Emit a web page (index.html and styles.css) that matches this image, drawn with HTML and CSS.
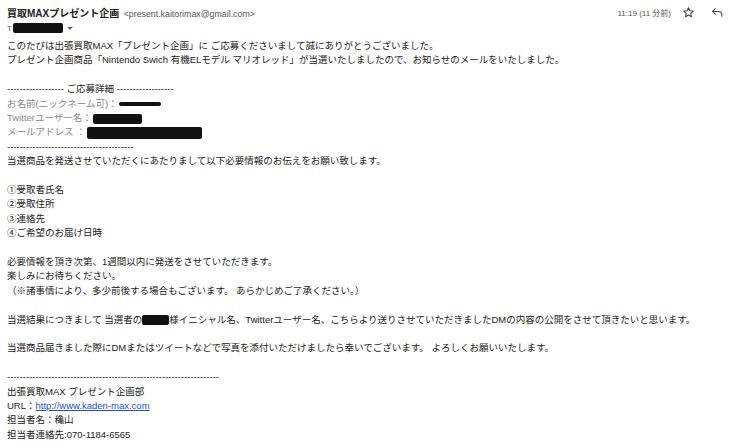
FILE: index.html
```html
<!DOCTYPE html>
<html lang="ja">
<head>
  <meta charset="UTF-8" />
  <title>当選のお知らせ</title>
  <link rel="stylesheet" href="styles.css">
</head>
<body>

  <div class="mail">
    <div class="mail-head">
      <div class="sender">
        <span class="sender-name">買取MAXプレゼント企画</span>
        <span class="sender-mail">&lt;present.kaitorimax@gmail.com&gt;</span>
      </div>
      <div class="meta">
        <span class="time">11:19 (11 分前)</span>
        <svg class="icon star" width="13" height="13" viewBox="0 0 24 24">
          <path d="M12 3.2l2.6 5.6 6.1.7-4.5 4.2 1.2 6-5.4-3.1-5.4 3.1 1.2-6-4.5-4.2 6.1-.7z" fill="none" stroke="#444" stroke-width="2" stroke-linejoin="round"/>
        </svg>
        <svg class="icon reply" width="13" height="13" viewBox="0 0 24 24">
          <path d="M8 5L3 10l5 5M3 10h11a6 6 0 0 1 6 6v3" fill="none" stroke="#444" stroke-width="2" stroke-linecap="round" stroke-linejoin="round"/>
        </svg>
      </div>
    </div>
    <div class="to-line">
      <span class="to">T</span><span class="redact redact-to"></span>
      <span class="caret"></span>
    </div>

    <div class="body">
      <p>このたびは出張買取MAX「プレゼント企画」に ご応募くださいまして誠にありがとうございました。<br>
      プレゼント企画商品「Nintendo Swich 有機ELモデル マリオレッド」が当選いたしましたので、お知らせのメールをいたしました。</p>

      <p>------------------ ご応募詳細 ------------------<br>
      <span class="muted">お名前(ニックネーム可)：</span><span class="redact redact-name"></span><br>
      <span class="muted">Twitterユーザー名：</span><span class="redact redact-tw"></span><br>
      <span class="muted">メールアドレス ：</span><span class="redact redact-mail"></span><br>
      ----------------------------------------<br>
      当選商品を発送させていただくにあたりまして以下必要情報のお伝えをお願い致します。</p>

      <p>①受取者氏名<br>
      ②受取住所<br>
      ③連絡先<br>
      ④ご希望のお届け日時</p>

      <p>必要情報を頂き次第、1週間以内に発送をさせていただきます。<br>
      楽しみにお待ちください。<br>
      （※諸事情により、多少前後する場合もございます。 あらかじめご了承ください。）</p>

      <p>当選結果につきまして 当選者の<span class="redact redact-winner"></span>様イニシャル名、Twitterユーザー名、こちらより送りさせていただきましたDMの内容の公開をさせて頂きたいと思います。</p>

      <p>当選商品届きました際にDMまたはツイートなどで写真を添付いただけましたら幸いでございます。 よろしくお願いいたします。</p>

      <p>-------------------------------------------------------------------<br>
      出張買取MAX プレゼント企画部<br>
      URL：<a href="#">http://www.kaden-max.com</a><br>
      担当者名：穐山<br>
      担当者連絡先:070-1184-6565</p>
    </div>
  </div>

</body>
</html>
```

FILE: styles.css
```css
body {
  margin: 0;
  background: #fff;
  font-family: "Liberation Sans", "Noto Sans CJK JP", sans-serif;
  color: #222;
}

.mail {
  padding: 4px 6px 0 7px;
}

.mail-head {
  display: flex;
  align-items: center;
  justify-content: space-between;
  height: 16px;
}

.sender-name {
  font-size: 10px;
  font-weight: bold;
  color: #222;
}

.sender-mail {
  font-size: 8.8px;
  color: #555;
}

.meta {
  display: flex;
  align-items: center;
}

.time {
  font-size: 8px;
  color: #555;
  margin-right: 11px;
}

.icon {
  display: block;
}

.star {
  margin-right: 16px;
}

.to-line {
  display: flex;
  align-items: center;
  height: 16px;
  font-size: 8px;
  color: #666;
}

.to {
  margin-right: 1px;
}

.caret {
  width: 0;
  height: 0;
  margin-left: 4px;
  border-left: 3px solid transparent;
  border-right: 3px solid transparent;
  border-top: 3px solid #666;
}

.body {
  font-size: 9.5px;
  line-height: 14.4px;
  padding-top: 3px;
}

.body p {
  margin: 0 0 14.4px;
}

.muted {
  color: #888;
}

.body a {
  color: #1a50d8;
}

.redact {
  display: inline-block;
  background: #111;
  border-radius: 2px;
  vertical-align: middle;
  filter: blur(0.4px);
}

.redact-to {
  width: 50px;
  height: 10px;
}

.redact-name {
  width: 42px;
  height: 4px;
  margin-left: 1px;
}

.redact-tw {
  width: 49px;
  height: 10px;
  margin-left: 1px;
}

.redact-mail {
  width: 115px;
  height: 12px;
  margin-left: 1px;
}

.redact-winner {
  width: 27px;
  height: 10px;
}
```
